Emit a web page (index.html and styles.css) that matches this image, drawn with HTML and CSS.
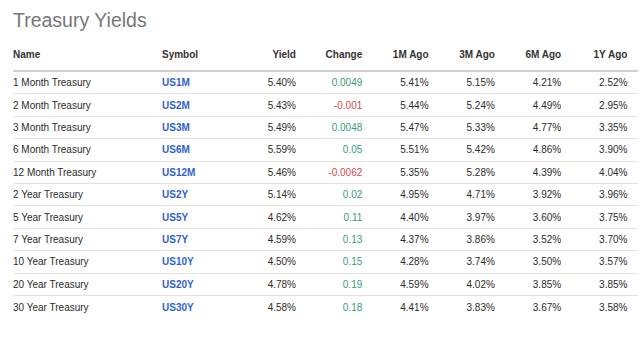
FILE: index.html
```html
<!DOCTYPE html>
<html>
<head>
<meta charset="utf-8">
<link rel="stylesheet" href="styles.css">
</head>
<body>
<div class="page">
  <h1 class="title">Treasury Yields</h1>
  <div class="table">
    <div class="row head">
      <div class="c name">Name</div>
      <div class="c sym">Symbol</div>
      <div class="c num">Yield</div>
      <div class="c num">Change</div>
      <div class="c num">1M Ago</div>
      <div class="c num">3M Ago</div>
      <div class="c num">6M Ago</div>
      <div class="c num">1Y Ago</div>
    </div>
    <div class="row"><div class="c name">1 Month Treasury</div><div class="c sym link">US1M</div><div class="c num">5.40%</div><div class="c num up">0.0049</div><div class="c num">5.41%</div><div class="c num">5.15%</div><div class="c num">4.21%</div><div class="c num">2.52%</div></div>
    <div class="row"><div class="c name">2 Month Treasury</div><div class="c sym link">US2M</div><div class="c num">5.43%</div><div class="c num down">-0.001</div><div class="c num">5.44%</div><div class="c num">5.24%</div><div class="c num">4.49%</div><div class="c num">2.95%</div></div>
    <div class="row"><div class="c name">3 Month Treasury</div><div class="c sym link">US3M</div><div class="c num">5.49%</div><div class="c num up">0.0048</div><div class="c num">5.47%</div><div class="c num">5.33%</div><div class="c num">4.77%</div><div class="c num">3.35%</div></div>
    <div class="row"><div class="c name">6 Month Treasury</div><div class="c sym link">US6M</div><div class="c num">5.59%</div><div class="c num up">0.05</div><div class="c num">5.51%</div><div class="c num">5.42%</div><div class="c num">4.86%</div><div class="c num">3.90%</div></div>
    <div class="row"><div class="c name">12 Month Treasury</div><div class="c sym link">US12M</div><div class="c num">5.46%</div><div class="c num down">-0.0062</div><div class="c num">5.35%</div><div class="c num">5.28%</div><div class="c num">4.39%</div><div class="c num">4.04%</div></div>
    <div class="row"><div class="c name">2 Year Treasury</div><div class="c sym link">US2Y</div><div class="c num">5.14%</div><div class="c num up">0.02</div><div class="c num">4.95%</div><div class="c num">4.71%</div><div class="c num">3.92%</div><div class="c num">3.96%</div></div>
    <div class="row"><div class="c name">5 Year Treasury</div><div class="c sym link">US5Y</div><div class="c num">4.62%</div><div class="c num up">0.11</div><div class="c num">4.40%</div><div class="c num">3.97%</div><div class="c num">3.60%</div><div class="c num">3.75%</div></div>
    <div class="row"><div class="c name">7 Year Treasury</div><div class="c sym link">US7Y</div><div class="c num">4.59%</div><div class="c num up">0.13</div><div class="c num">4.37%</div><div class="c num">3.86%</div><div class="c num">3.52%</div><div class="c num">3.70%</div></div>
    <div class="row"><div class="c name">10 Year Treasury</div><div class="c sym link">US10Y</div><div class="c num">4.50%</div><div class="c num up">0.15</div><div class="c num">4.28%</div><div class="c num">3.74%</div><div class="c num">3.50%</div><div class="c num">3.57%</div></div>
    <div class="row"><div class="c name">20 Year Treasury</div><div class="c sym link">US20Y</div><div class="c num">4.78%</div><div class="c num up">0.19</div><div class="c num">4.59%</div><div class="c num">4.02%</div><div class="c num">3.85%</div><div class="c num">3.85%</div></div>
    <div class="row last"><div class="c name">30 Year Treasury</div><div class="c sym link">US30Y</div><div class="c num">4.58%</div><div class="c num up">0.18</div><div class="c num">4.41%</div><div class="c num">3.83%</div><div class="c num">3.67%</div><div class="c num">3.58%</div></div>
  </div>
</div>
</body>
</html>
```

FILE: styles.css
```css
* { box-sizing: border-box; }
html, body { margin: 0; padding: 0; background: #fff; }
body {
  font-family: "Liberation Sans", Arial, sans-serif;
  color: #2b2b2b;
}
.page {
  padding: 8px 2px 0 13px;
}
.title {
  margin: 0 0 7px 0;
  font-size: 19.5px;
  line-height: 24px;
  font-weight: normal;
  color: #777;
}
.table {
  width: 625px;
}
.row {
  display: grid;
  grid-template-columns: 149px 77.7px repeat(6, 66.3px);
  align-items: center;
  height: 22.4px;
  border-bottom: 1px solid #e3e3e3;
  font-size: 10px;
}
.row.head {
  height: 33px;
  border-bottom: 2px solid #cfcfcf;
  font-weight: bold;
  color: #333;
  padding-bottom: 1px;
}
.row.last { border-bottom: none; }
.c {
  white-space: nowrap;
}
.num {
  text-align: right;
  padding-right: 10px;
}
.link {
  color: #2f5fd3;
  font-weight: bold;
}
.up { color: #3b9a78; }
.down { color: #d24b4b; }
```
